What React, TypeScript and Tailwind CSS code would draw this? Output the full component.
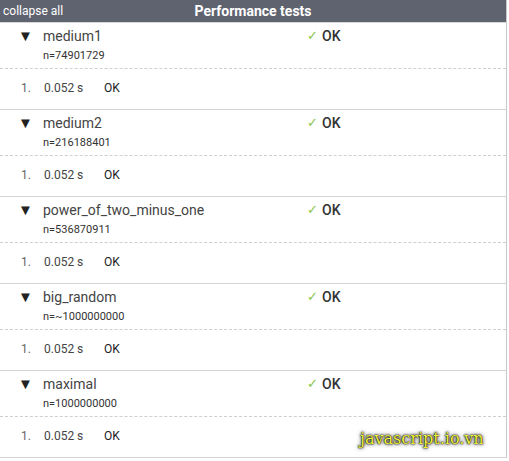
import React from "react";

type TestCase = {
  name: string;
  input: string;
  time: string;
  status: string;
};

const tests: TestCase[] = [
  { name: "medium1", input: "n=74901729", time: "0.052 s", status: "OK" },
  { name: "medium2", input: "n=216188401", time: "0.052 s", status: "OK" },
  { name: "power_of_two_minus_one", input: "n=536870911", time: "0.052 s", status: "OK" },
  { name: "big_random", input: "n=~1000000000", time: "0.052 s", status: "OK" },
  { name: "maximal", input: "n=1000000000", time: "0.052 s", status: "OK" },
];

function TestBlock({ test }: { test: TestCase }) {
  return (
    <div className="border-b border-[#d4d4d4]">
      <div className="border-b border-dashed border-[#cfcfcf] pt-[3px] pb-[4px]">
        <div className="flex h-[20px] items-center">
          <span className="ml-[18px] w-[25px] text-[15px] leading-none text-[#222]">▼</span>
          <span className="w-[264px] text-[14px] text-[#444]">{test.name}</span>
          <span className="flex items-center gap-[4px] text-[14px] font-medium text-[#333]">
            <span className="text-[13px] font-normal text-[#8bc34a]">✓</span>
            {test.status}
          </span>
        </div>
        <div className="mt-[1px] h-[17px] pl-[43px] text-[11px] leading-[17px] text-[#333]">{test.input}</div>
      </div>
      <div className="flex h-[40px] items-start pt-[9px] text-[12px] leading-[20px]">
        <span className="ml-[21px] w-[23px] text-[#666]">1.</span>
        <span className="w-[60px] text-[#444]">{test.time}</span>
        <span className="text-[#222]">{test.status}</span>
      </div>
    </div>
  );
}

export default function App() {
  return (
    <div className="relative h-[461px] w-[509px] bg-white font-['Roboto',sans-serif]">
      <div className="w-[507px] border-r border-[#c8c8c8]">
        <div className="relative flex h-[23px] items-center border-b border-[#d6d6d6] bg-[#5f636f] text-white">
          <span className="pl-[3px] text-[12px]">collapse all</span>
          <span className="absolute left-1/2 -translate-x-1/2 text-[14px] font-bold">Performance tests</span>
        </div>
        {tests.map((test) => (
          <TestBlock key={test.name} test={test} />
        ))}
      </div>
      <span className="absolute left-[360px] top-[427px] font-['DejaVu_Serif',serif] text-[16px] text-[#f2f23c] [text-shadow:0_0_4px_#000,0_0_2px_#000,0_0_1px_#000]">
        javascript.io.vn
      </span>
    </div>
  );
}
